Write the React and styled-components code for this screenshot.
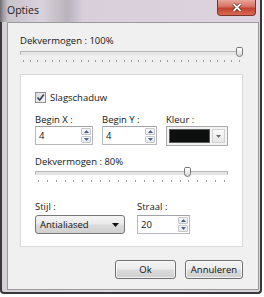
import React from 'react';
import styled, { createGlobalStyle } from 'styled-components';

const GlobalStyle = createGlobalStyle`
  body {
    margin: 0;
    background: #ffffff;
    font-family: "Open Sans", "Noto Sans", sans-serif;
  }
`;

// venster met glasrand
const Window = styled.div`
  box-sizing: border-box;
  width: 262px;
  height: 294px;
  padding: 0 1px 2px 5px;
  border: 2px solid #38383a;
  border-top: none;
  border-radius: 0 0 4px 4px;
  background: linear-gradient(90deg, #d4d0d6 0%, #dcd8de 40%, #d6d2d8 100%);
  display: flex;
  flex-direction: column;
`;

const TitleBar = styled.div`
  height: 22px;
  margin: 0 -1px 0 -7px;
  padding-left: 7px;
  display: flex;
  justify-content: space-between;
  align-items: flex-start;
  background: linear-gradient(90deg, #6e6b70 0px, #9c989e 3px, #c9c3cb 8px, #d9d1dc 16%, #c7c0c9 22%, #b9b3bb 26%, #d8cfdb 32%, #ddd3df 100%);
`;

const Title = styled.span`
  padding-top: 4px;
  font-size: 10.5px;
  line-height: 13px;
  color: #1c1c1c;
`;

const CloseButton = styled.div`
  width: 39px;
  height: 16px;
  margin-right: 4px;
  box-sizing: border-box;
  border: 1px solid #7a3430;
  border-top: none;
  border-radius: 0 0 4px 4px;
  background: linear-gradient(180deg, #e7a597 0%, #d6705f 45%, #c4412f 55%, #d96a4f 100%);
  display: flex;
  align-items: center;
  justify-content: center;
`;

const Client = styled.div`
  flex: 1;
  border: 1px solid #9a9a9c;
  background: #f0f0f0;
  padding: 12px 15px 0 12px;
  display: flex;
  flex-direction: column;
`;

const Label = styled.div`
  font-size: 9.5px;
  line-height: 12px;
  color: #161616;
  white-space: nowrap;
  margin-top: ${p => p.$top || 0}px;
`;

const SliderWrap = styled.div`
  position: relative;
  height: 11px;
  margin-top: ${p => p.$offset || 0}px;
`;

const Track = styled.div`
  position: absolute;
  left: 0;
  right: 0;
  top: 4px;
  height: 2px;
  border: 1px solid #b6b6b6;
  border-bottom-color: #e2e2e2;
  background: #e6e6e6;
`;

const Thumb = styled.div`
  position: absolute;
  top: 0;
  width: 7px;
  height: 10px;
  box-sizing: border-box;
  border: 1px solid #777;
  border-radius: 2px 2px 4px 4px;
  background: linear-gradient(180deg, #ffffff 0%, #ececec 50%, #d6d6d6 100%);
`;

const Ticks = styled.div`
  display: flex;
  justify-content: space-between;
  margin-top: 2px;
  padding: 0 3px;
`;

const Tick = styled.span`
  width: 1px;
  height: 2px;
  background: #9c9c9c;
`;

const Panel = styled.div`
  margin-top: 12px;
  background: #ffffff;
  border: 1px solid #d9d9d9;
  padding: 16px 14px 12px 14px;
  display: flex;
  flex-direction: column;
`;

const CheckRow = styled.div`
  display: flex;
  align-items: center;
  gap: 4px;
  height: 13px;
`;

const CheckBox = styled.div`
  width: 11px;
  height: 11px;
  box-sizing: border-box;
  border: 1px solid #8e8f8f;
  background: linear-gradient(135deg, #dcdcdc 0%, #f6f6f6 100%);
  display: flex;
  align-items: center;
  justify-content: center;
`;

const FieldGrid = styled.div`
  display: grid;
  grid-template-columns: ${p => p.$cols};
  column-gap: ${p => p.$gap}px;
  margin-top: ${p => p.$top}px;
`;

const Field = styled.div`
  display: flex;
  flex-direction: column;
  gap: ${p => p.$gap || 0}px;
`;

const SpinBox = styled.div`
  height: 19px;
  box-sizing: border-box;
  border: 1px solid #b5b8bf;
  border-top-color: #9fa2a9;
  background: #ffffff;
  display: flex;
  align-items: center;
  justify-content: space-between;
  padding: 1px;
`;

const SpinText = styled.span`
  padding-left: 2px;
  font-size: 9.5px;
  color: #111;
`;

const SpinButtons = styled.div`
  display: flex;
  flex-direction: column;
  gap: 1px;
`;

const SpinButton = styled.div`
  width: 10px;
  height: 7px;
  box-sizing: border-box;
  border: 1px solid #c4c7cc;
  border-radius: 1px;
  background: linear-gradient(180deg, #f8f9fa, #e5e8ec);
  display: flex;
  align-items: center;
  justify-content: center;
`;

const ColorCombo = styled.div`
  height: 20px;
  box-sizing: border-box;
  border: 1px solid #a9a9a9;
  background: #f3f3f3;
  display: flex;
  align-items: stretch;
  padding: 2px;
  gap: 2px;
`;

const Swatch = styled.div`
  flex: 1;
  background: #0d0f0e;
  border: 1px solid #5c5c5c;
`;

const ComboArrow = styled.div`
  width: 11px;
  display: flex;
  align-items: center;
  justify-content: center;
  border: 1px solid #d2d2d2;
  background: linear-gradient(180deg, #fafafa, #e6e6e6);
`;

const Select = styled.div`
  height: 19px;
  box-sizing: border-box;
  border: 1px solid #767676;
  border-radius: 3px;
  background: linear-gradient(180deg, #f4f4f4 0%, #eaeaea 48%, #dcdcdc 52%, #d0d0d0 100%);
  display: flex;
  align-items: center;
  justify-content: space-between;
  padding: 0 5px 0 4px;
  font-size: 9.5px;
  color: #111;
`;

const ButtonRow = styled.div`
  display: flex;
  justify-content: flex-end;
  gap: 9px;
  margin-top: 13px;
`;

const Button = styled.div`
  width: ${p => p.$w}px;
  height: 19px;
  box-sizing: border-box;
  border: 1px solid #707070;
  border-radius: 3px;
  background: linear-gradient(180deg, #f3f3f3 0%, #ebebeb 48%, #dcdcdc 52%, #cfcfcf 100%);
  box-shadow: inset 0 0 0 1px rgba(255, 255, 255, 0.7);
  display: flex;
  align-items: center;
  justify-content: center;
  font-size: 9.5px;
  color: #111;
`;

const Arrow = ({ up, color = '#4d6185' }) => (
  <svg width="5" height="3" viewBox="0 0 5 3">
    <path d={up ? 'M0 3 L2.5 0 L5 3 Z' : 'M0 0 L5 0 L2.5 3 Z'} fill={color} />
  </svg>
);

const Slider = ({ value, ticks, offset }) => (
  <>
    <SliderWrap $offset={offset}>
      <Track />
      <Thumb style={{ left: `calc((100% - 7px) * ${value / 100})` }} />
    </SliderWrap>
    <Ticks>
      {Array.from({ length: ticks }).map((_, i) => <Tick key={i} />)}
    </Ticks>
  </>
);

const Spin = ({ value }) => (
  <SpinBox>
    <SpinText>{value}</SpinText>
    <SpinButtons>
      <SpinButton><Arrow up /></SpinButton>
      <SpinButton><Arrow /></SpinButton>
    </SpinButtons>
  </SpinBox>
);

export default function App() {
  return (
    <>
      <GlobalStyle />
      <Window>
        <TitleBar>
          <Title>Opties</Title>
          <CloseButton>
            <svg width="10" height="9" viewBox="0 0 10 9">
              <path d="M1.5 1 L8.5 8 M8.5 1 L1.5 8" stroke="#5a1a14" strokeWidth="3.2" />
              <path d="M1.5 1 L8.5 8 M8.5 1 L1.5 8" stroke="#ffffff" strokeWidth="1.8" />
            </svg>
          </CloseButton>
        </TitleBar>
        <Client>
          <Label>Dekvermogen : 100%</Label>
          <Slider value={100} ticks={31} />
          <Panel>
            <CheckRow>
              <CheckBox>
                <svg width="9" height="9" viewBox="0 0 9 9">
                  <path d="M1.5 4.5 L3.7 7 L7.8 1.5" stroke="#2c3f63" strokeWidth="1.6" fill="none" />
                </svg>
              </CheckBox>
              <Label>Slagschaduw</Label>
            </CheckRow>
            <FieldGrid $cols="58px 55px 1fr" $gap={9} $top={10}>
              <Field>
                <Label>Begin X :</Label>
                <Spin value="4" />
              </Field>
              <Field>
                <Label>Begin Y :</Label>
                <Spin value="4" />
              </Field>
              <Field>
                <Label>Kleur :</Label>
                <ColorCombo>
                  <Swatch />
                  <ComboArrow><Arrow color="#6a6a6a" /></ComboArrow>
                </ColorCombo>
              </Field>
            </FieldGrid>
            <Label $top={10}>Dekvermogen : 80%</Label>
            <Slider value={80} ticks={22} offset={-1} />
            <FieldGrid $cols="90px 53px" $gap={12} $top={19}>
              <Field $gap={2}>
                <Label>Stijl :</Label>
                <Select>
                  Antialiased
                  <svg width="7" height="4" viewBox="0 0 7 4">
                    <path d="M0 0 L7 0 L3.5 4 Z" fill="#111" />
                  </svg>
                </Select>
              </Field>
              <Field $gap={2}>
                <Label>Straal :</Label>
                <Spin value="20" />
              </Field>
            </FieldGrid>
          </Panel>
          <ButtonRow>
            <Button $w={61}>Ok</Button>
            <Button $w={58}>Annuleren</Button>
          </ButtonRow>
        </Client>
      </Window>
    </>
  );
}
